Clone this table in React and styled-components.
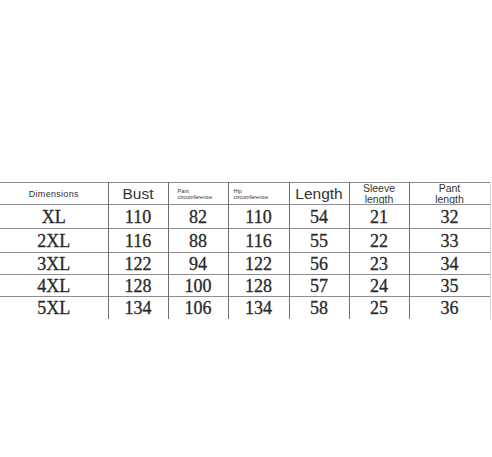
import styled, { createGlobalStyle } from 'styled-components';

const GlobalStyle = createGlobalStyle`
  html, body {
    margin: 0;
    padding: 0;
    background: #ffffff;
  }
`;

const COLS = [108, 60, 60, 61, 60, 60, 81];

const ROWS = [
  { size: 'XL', values: [110, 82, 110, 54, 21, 32], h: 24 },
  { size: '2XL', values: [116, 88, 116, 55, 22, 33], h: 24 },
  { size: '3XL', values: [122, 94, 122, 56, 23, 34], h: 22 },
  { size: '4XL', values: [128, 100, 128, 57, 24, 35], h: 22 },
  { size: '5XL', values: [134, 106, 134, 58, 25, 36], h: 22 },
];

function App() {
  return (
    <>
      <GlobalStyle />
      <Page>
        <SizeTable>
          <colgroup>
            {COLS.map((w, i) => (
              <col key={i} style={{ width: w }} />
            ))}
          </colgroup>
          <thead>
            <HeadRow>
              <HeadCell $size={9} $spacing={0.3}>
                Dimensions
              </HeadCell>
              <HeadCell $size={15.5}>Bust</HeadCell>
              <TinyCell>
                Pant
                <br />
                circumference
              </TinyCell>
              <TinyCell $pad={5}>
                Hip
                <br />
                circumference
              </TinyCell>
              <HeadCell $size={15.5}>Length</HeadCell>
              <HeadCell $size={10.5} $lh={10.5}>
                Sleeve
                <br />
                length
              </HeadCell>
              <HeadCell $size={10.5} $lh={10.5}>
                Pant
                <br />
                length
              </HeadCell>
            </HeadRow>
          </thead>
          <tbody>
            {ROWS.map((row, i) => (
              <DataRow key={row.size} $h={row.h} $last={i === ROWS.length - 1}>
                <DataCell>{row.size}</DataCell>
                {row.values.map((v, j) => (
                  <DataCell key={j}>{v}</DataCell>
                ))}
              </DataRow>
            ))}
          </tbody>
        </SizeTable>
      </Page>
    </>
  );
}

const Page = styled.div`
  width: 492px;
  height: 457px;
  padding-top: 182px;
  box-sizing: border-box;
  background: #fff;
  overflow: hidden;
`;

const SizeTable = styled.table`
  width: 490px;
  border-collapse: collapse;
  table-layout: fixed;
  color: #2a2a2a;

  td,
  th {
    padding: 0;
    border-left: 1px solid #6f6f6f;
    text-align: center;
    overflow: hidden;
    white-space: nowrap;
  }
  td:first-child,
  th:first-child {
    border-left: none;
  }
  td:last-child,
  th:last-child {
    border-right: 1px solid #d8d8d8;
  }
`;

const HeadRow = styled.tr`
  height: 21px;
  border-top: 1.5px solid #8e8e8e;
  border-bottom: 1.5px solid #8e8e8e;
`;

const HeadCell = styled.th`
  font-family: 'Liberation Sans', Arial, sans-serif;
  font-weight: normal;
  font-size: ${(p) => p.$size}px;
  line-height: ${(p) => (p.$lh ? `${p.$lh}px` : 'normal')};
  letter-spacing: ${(p) => p.$spacing ?? 0}px;
  color: #333;
  vertical-align: middle;
`;

const TinyCell = styled.th`
  font-family: 'Liberation Sans', Arial, sans-serif;
  font-weight: normal;
  font-size: 5.5px;
  line-height: 6px;
  color: #333;
  text-align: left !important;
  padding-left: ${(p) => p.$pad ?? 9}px !important;
  vertical-align: middle;
`;

const DataRow = styled.tr`
  height: ${(p) => p.$h}px;
  border-bottom: ${(p) => (p.$last ? 'none' : '1.5px solid #8e8e8e')};
`;

const DataCell = styled.td`
  font-family: 'Liberation Serif', 'Times New Roman', serif;
  font-size: 18px;
  line-height: 18px;
  color: #2a2a2a;
  -webkit-text-stroke: 0.3px #2a2a2a;
  vertical-align: middle;
`;

export default App;
